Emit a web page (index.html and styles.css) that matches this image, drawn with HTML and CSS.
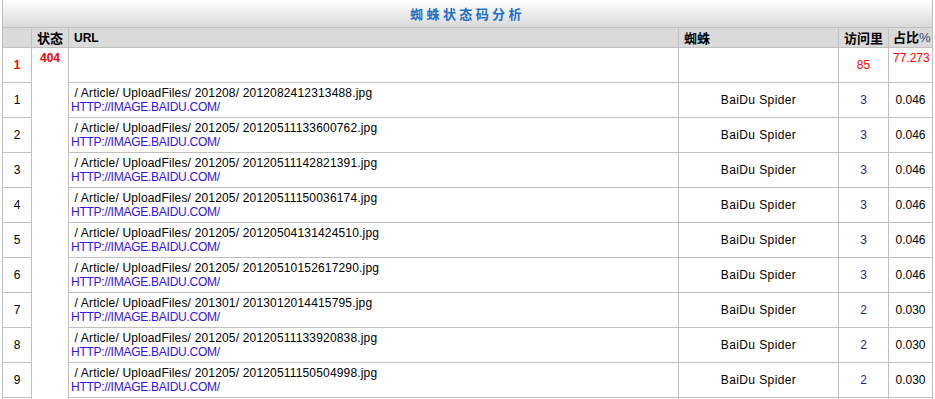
FILE: index.html
```html
<!DOCTYPE html>
<html>
<head>
<meta charset="utf-8">
<link rel="stylesheet" href="styles.css">
</head>
<body>
<table class="grid">
  <colgroup>
    <col class="c-no"><col class="c-status"><col class="c-url"><col class="c-spider"><col class="c-visits"><col class="c-ratio">
  </colgroup>
  <tr class="title-row"><th colspan="6" class="title">蜘蛛状态码分析</th></tr>
  <tr class="head-row">
    <th class="h-center"></th>
    <th class="h-center">状态</th>
    <th class="h-left h-url">URL</th>
    <th class="h-left">蜘蛛</th>
    <th class="h-center">访问里</th>
    <th class="h-left h-ratio">占比<span class="pct">%</span></th>
  </tr>
  <tr class="row group">
    <td class="no red bold">1</td>
    <td class="status red bold" rowspan="11">404</td>
    <td></td>
    <td></td>
    <td class="num red">85</td>
    <td class="top red">77.273</td>
  </tr>
  <tr class="row"><td class="no">1</td><td class="url">&nbsp;/ Article/ UploadFiles/ 201208/ 2012082412313488.jpg<br><span class="link">HTTP://IMAGE.BAIDU.COM/</span></td><td class="spider">BaiDu Spider</td><td class="num visits">3</td><td class="num">0.046</td></tr>
  <tr class="row"><td class="no">2</td><td class="url">&nbsp;/ Article/ UploadFiles/ 201205/ 20120511133600762.jpg<br><span class="link">HTTP://IMAGE.BAIDU.COM/</span></td><td class="spider">BaiDu Spider</td><td class="num visits">3</td><td class="num">0.046</td></tr>
  <tr class="row"><td class="no">3</td><td class="url">&nbsp;/ Article/ UploadFiles/ 201205/ 20120511142821391.jpg<br><span class="link">HTTP://IMAGE.BAIDU.COM/</span></td><td class="spider">BaiDu Spider</td><td class="num visits">3</td><td class="num">0.046</td></tr>
  <tr class="row"><td class="no">4</td><td class="url">&nbsp;/ Article/ UploadFiles/ 201205/ 20120511150036174.jpg<br><span class="link">HTTP://IMAGE.BAIDU.COM/</span></td><td class="spider">BaiDu Spider</td><td class="num visits">3</td><td class="num">0.046</td></tr>
  <tr class="row"><td class="no">5</td><td class="url">&nbsp;/ Article/ UploadFiles/ 201205/ 20120504131424510.jpg<br><span class="link">HTTP://IMAGE.BAIDU.COM/</span></td><td class="spider">BaiDu Spider</td><td class="num visits">3</td><td class="num">0.046</td></tr>
  <tr class="row"><td class="no">6</td><td class="url">&nbsp;/ Article/ UploadFiles/ 201205/ 20120510152617290.jpg<br><span class="link">HTTP://IMAGE.BAIDU.COM/</span></td><td class="spider">BaiDu Spider</td><td class="num visits">3</td><td class="num">0.046</td></tr>
  <tr class="row"><td class="no">7</td><td class="url">&nbsp;/ Article/ UploadFiles/ 201301/ 2013012014415795.jpg<br><span class="link">HTTP://IMAGE.BAIDU.COM/</span></td><td class="spider">BaiDu Spider</td><td class="num visits">2</td><td class="num">0.030</td></tr>
  <tr class="row"><td class="no">8</td><td class="url">&nbsp;/ Article/ UploadFiles/ 201205/ 20120511133920838.jpg<br><span class="link">HTTP://IMAGE.BAIDU.COM/</span></td><td class="spider">BaiDu Spider</td><td class="num visits">2</td><td class="num">0.030</td></tr>
  <tr class="row"><td class="no">9</td><td class="url">&nbsp;/ Article/ UploadFiles/ 201205/ 20120511150504998.jpg<br><span class="link">HTTP://IMAGE.BAIDU.COM/</span></td><td class="spider">BaiDu Spider</td><td class="num visits">2</td><td class="num">0.030</td></tr>
  <tr class="row"><td class="no"></td><td class="url"></td><td class="spider"></td><td class="num visits"></td><td class="num"></td></tr>
</table>
</body>
</html>
```
FILE: styles.css
```css
html, body {
  margin: 0;
  padding: 0;
  background: #ffffff;
  overflow: hidden;
}
body {
  font-family: "Liberation Sans", Arial, "Noto Sans CJK SC", sans-serif;
  font-size: 12px;
  color: #000;
}
.grid {
  margin: -1px 0 0 2px;
  width: 931px;
  table-layout: fixed;
  border-collapse: separate;
  border-spacing: 0;
  border-left: 1px solid #c0c0c0;
  border-top: 1px solid #c0c0c0;
}
.c-no { width: 29px; }
.c-status { width: 37px; }
.c-url { width: 610px; }
.c-spider { width: 160px; }
.c-visits { width: 50px; }
.c-ratio { width: 44px; }
.grid th, .grid td {
  border-right: 1px solid #c0c0c0;
  border-bottom: 1px solid #c0c0c0;
  padding: 0;
  overflow: visible;
  white-space: nowrap;
}
.title-row { height: 28px; }
.title {
  background: linear-gradient(#ffffff, #d9d9d9);
  color: #1b6fc8;
  font-family: "Noto Sans CJK SC", sans-serif;
  font-size: 13px;
  font-weight: bold;
  letter-spacing: 3.4px;
  text-align: center;
  vertical-align: middle;
  padding-left: 26px;
}
.head-row { height: 20px; }
.head-row th {
  background: #dadada;
  font-family: "Noto Sans CJK SC", sans-serif;
  font-size: 13px;
  font-weight: bold;
  line-height: 18px;
  vertical-align: middle;
}
.head-row .h-url {
  font-family: "Liberation Sans", Arial, sans-serif;
  font-size: 12px;
}
.h-center { text-align: center; }
.h-left { text-align: left; padding-left: 5px !important; }
.h-ratio { padding-left: 4px !important; }
.pct {
  font-family: "Liberation Sans", Arial, sans-serif;
  font-weight: normal;
  color: #1f4f6f;
}
.row { height: 35px; }
.row td { vertical-align: middle; }
.no { text-align: center; }
.red { color: #ff0000; }
.bold { font-weight: bold; }
.status {
  vertical-align: top !important;
  text-align: center;
  padding-top: 3px !important;
}
.top {
  vertical-align: top !important;
  text-align: left;
  padding-top: 3px !important;
  padding-left: 4px !important;
}
.url {
  line-height: 14px;
  padding-left: 2px !important;
  text-align: left;
  letter-spacing: 0.17px;
}
.link {
  color: #3510f0;
  letter-spacing: -0.25px;
}
.spider {
  text-align: center;
  letter-spacing: 0.4px;
}
.num { text-align: center; }
.visits { color: #1e1ea0; }
```
